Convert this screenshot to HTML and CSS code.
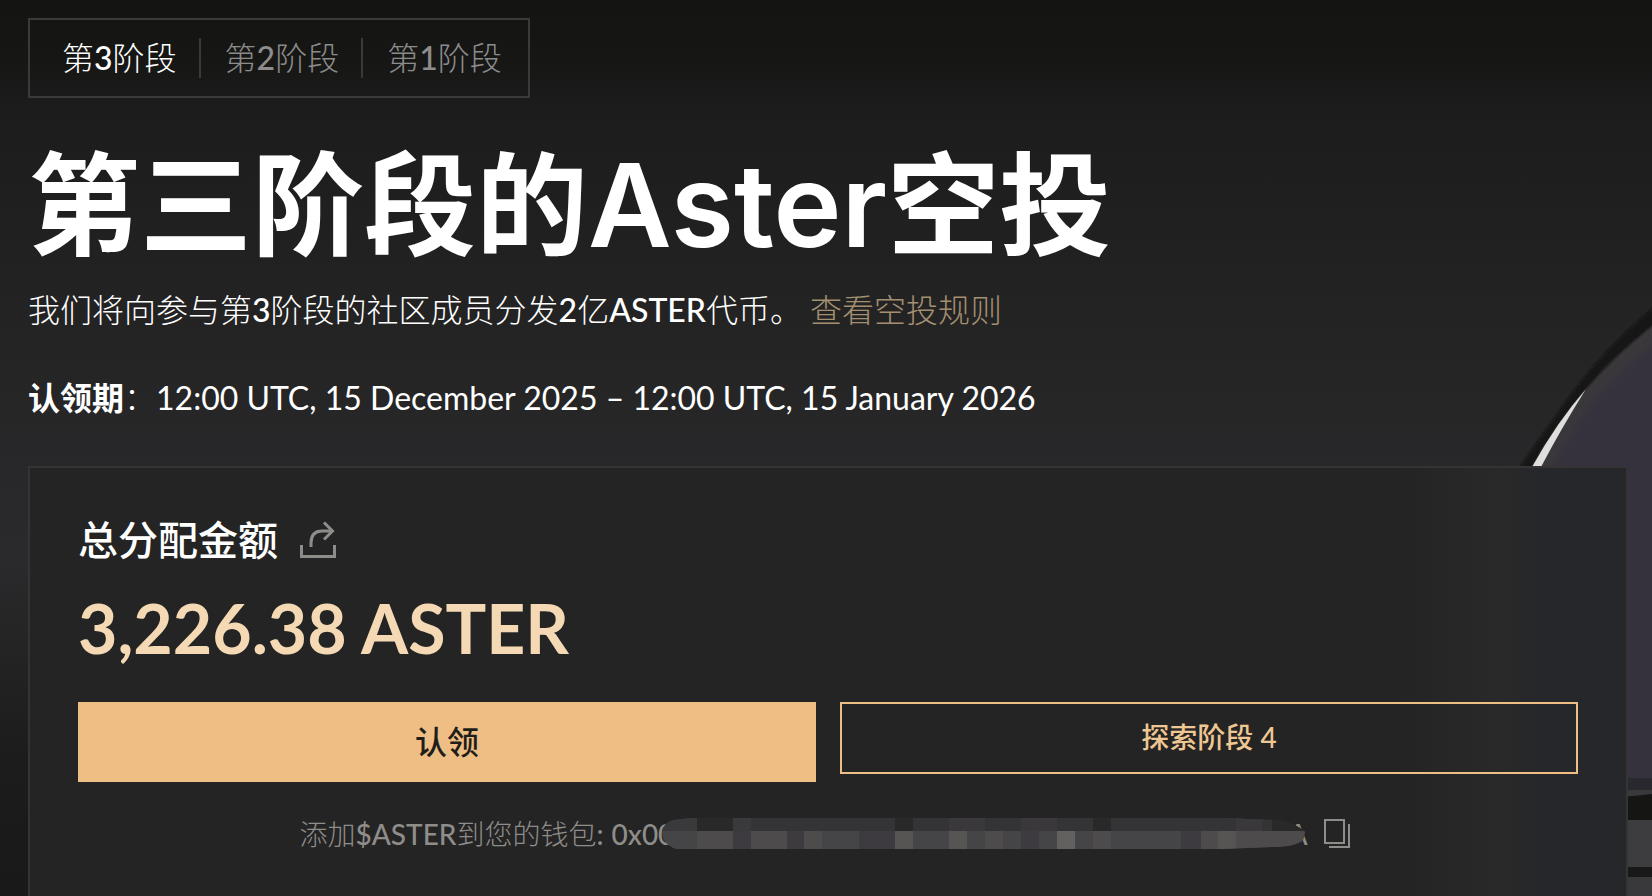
FILE: index.html
```html
<!DOCTYPE html>
<html lang="zh-CN">
<head>
<meta charset="utf-8">
<title>Aster 空投</title>
<link rel="stylesheet" href="styles.css">
</head>
<body>
<div class="page">
  <svg class="planet" viewBox="0 0 302 616" aria-hidden="true">
    <defs>
      <filter id="soft" x="-20%" y="-20%" width="140%" height="140%"><feGaussianBlur stdDeviation="1"/></filter>
      <filter id="softer" x="-20%" y="-20%" width="140%" height="140%"><feGaussianBlur stdDeviation="4"/></filter>
    </defs>
    <path d="M340 2L302 29Q246 76 208 133Q187 162 170 187V498H340Z" fill="#131312" filter="url(#soft)"/>
    <path d="M340 18L302 46Q262 78 236 109Q203 148 182 187V498H340Z" fill="#3a393b" filter="url(#soft)"/>
    <path d="M350 34L302 66Q262 96 236 132Q216 160 202 187V530H350Z" fill="#34323c" filter="url(#softer)"/>
    <path d="M236 109Q207 142 182 187H191Q212 147 236 109Z" fill="#dededc"/>
    <path d="M270 498H302V511H270Z" fill="#29282f"/>
    <path d="M270 510H302V616H270Z" fill="#39383b"/>
    <path d="M270 517Q286 516 302 514V540H270Z" fill="#151514"/>
    <path d="M270 540H302V587H270Z" fill="#3d3c3f"/>
    <path d="M270 587H302V597H270Z" fill="#191919"/>
  </svg>
  <main class="content">
    <nav class="tabs" aria-label="阶段">
      <button class="tab tab-active" type="button">第<span class="latin">3</span>阶段</button>
      <button class="tab" type="button">第<span class="latin">2</span>阶段</button>
      <button class="tab" type="button">第<span class="latin">1</span>阶段</button>
    </nav>
    <h1 class="title">第三阶段的<span class="title-brand">Aster</span>空投</h1>
    <p class="intro">我们将向参与第<span class="latin">3</span>阶段的社区成员分发<span class="latin">2</span>亿<span class="latin">ASTER</span>代币。<a class="rules" href="#rules">查看空投规则</a></p>
    <p class="period"><strong>认领期</strong><span class="colon">：</span><span>12:00 UTC, 15 December 2025 – 12:00 UTC, 15 January 2026</span></p>
    <section class="card">
      <div class="card-head">
        <h2 class="card-title">总分配金额</h2>
        <button class="icon-button" type="button" aria-label="分享">
          <svg width="36" height="38" viewBox="0 0 36 38" fill="none" stroke="currentColor" stroke-width="3"><path d="M1.500 24V35.500H34.500V24"/><path d="M11 26V22Q11 10 22 10H32"/><path d="M24 1.500L32.500 10L24 18.500"/></svg>
        </button>
      </div>
      <p class="amount">3,226.38 ASTER</p>
      <div class="actions">
        <button class="btn btn-primary" type="button">认领</button>
        <button class="btn btn-outline" type="button">探索阶段 4</button>
      </div>
      <div class="wallet">
        <span>添加<span class="latin">$ASTER</span>到您的钱包<span class="latin">:</span></span>
        <span class="address"><span>0x00</span><span>A</span>
          <svg class="mask" viewBox="0 0 644 32" preserveAspectRatio="none" aria-hidden="true">
            <defs><clipPath id="smear"><path d="M12 2L30 0H560L612 2Q636 6 643 14L641 22Q634 29 610 29L560 31H14Q0 26 0 14Q2 4 12 2Z"/></clipPath></defs>
            <g clip-path="url(#smear)">
              <path d="M0 0H644V31H0Z" fill="#454446"/>
              <path d="M0 0H644V13H0Z" fill="#343336"/>
              <path d="M0 0H35V13H0ZM71 0H89V13H71Z" fill="#3a393b"/>
              <path d="M35 0H71V13H35ZM233 0H251V13H233ZM431 0H449V13H431ZM610 0H644V13H610Z" fill="#292929"/>
              <path d="M287 0H323V13H287ZM359 0H395V13H359ZM574 0H600V13H574Z" fill="#3a383a"/>
              <path d="M35 13H71V31H35ZM89 13H125V31H89ZM142 13H160V31H142ZM323 13H341V31H323ZM431 13H449V31H431ZM539 13H556V31H539ZM574 13H644V31H574Z" fill="#4d4b4b"/>
              <path d="M71 13H89V31H71ZM125 13H142V31H125ZM197 13H233V31H197ZM359 13H377V31H359ZM519 13H539V31H519Z" fill="#3d3b3f"/>
              <path d="M233 13H251V31H233ZM287 13H305V31H287ZM556 13H574V31H556Z" fill="#575454"/>
              <path d="M395 13H413V31H395Z" fill="#636060"/>
            </g>
          </svg>
        </span>
        <button class="icon-button" type="button" aria-label="复制地址">
          <svg width="27" height="30" viewBox="0 0 27 30" fill="none" stroke="currentColor" stroke-width="2"><path d="M1 1H20V24H1Z"/><path d="M25 5V28H5"/></svg>
        </button>
      </div>
    </section>
  </main>
</div>
</body>
</html>
```
FILE: styles.css
```css
* { box-sizing: border-box; margin: 0; padding: 0; }

body {
  background: #1a1a1a;
  color: #fff;
  font-family: Lato, "Noto Sans CJK SC", sans-serif;
}

button { font: inherit; color: inherit; background: none; border: 0; cursor: pointer; }

.page {
  position: relative;
  overflow: hidden;
  background: linear-gradient(180deg, #141412 0, #161615 60px, #1c1c1c 110px, #222 280px, #28282a 470px, #2a2a2c 560px, #1c1c1c 760px, #191919 100%);
}

.planet {
  position: absolute;
  right: 0;
  top: 280px;
  width: 302px;
  height: 616px;
}

.content {
  position: relative;
  display: flex;
  flex-direction: column;
  min-height: 100vh;
  padding: 18px 24px 0 28px;
}

.latin { font-weight: 500; }

.tabs {
  display: flex;
  align-items: center;
  width: fit-content;
  padding: 18px 4px 18px 8px;
  border: 2px solid #3a3a3a;
}

.tab {
  padding: 0 22px 0 24px;
  font-size: 32px;
  line-height: 40px;
  font-weight: 300;
  color: #8c8c8c;
}

.tab + .tab { border-left: 2px solid #3a3a3a; }
.tab-active { color: #fff; }

.title {
  margin-top: 38px;
  font-family: Inter, "Noto Sans CJK SC", sans-serif;
  font-size: 112px;
  line-height: 140px;
  font-weight: 600;
}

.title-brand { font-size: 115px; }

.intro {
  margin-top: 10px;
  font-size: 32px;
  line-height: 48px;
  font-weight: 300;
}

.rules { margin-left: 8px; color: #a39071; text-decoration: none; }

.period {
  margin-top: 40px;
  font-size: 32px;
  line-height: 48px;
  font-weight: 400;
}

.colon { font-weight: 300; }

.card {
  flex: 1;
  margin-top: 44px;
  padding: 44px 48px 32px;
  border: 2px solid #343434;
  border-bottom: 0;
  background: linear-gradient(90deg, #242424 0, #242424 86%, #292929 92%, #26272b 95%, #26272b 100%);
}

.card-head { display: flex; align-items: center; gap: 22px; }

.card-title { font-size: 40px; line-height: 56px; font-weight: 500; }

.icon-button { display: flex; color: #8f8d8a; }

.amount {
  margin-top: 20px;
  font-size: 68px;
  line-height: 80px;
  font-weight: 700;
  color: #f4d9b4;
}

.actions {
  display: grid;
  grid-template-columns: 1fr 1fr;
  align-items: start;
  gap: 24px;
  margin-top: 34px;
}

.btn { padding-bottom: 4px; font-weight: 500; }
.btn-primary { height: 80px; font-size: 32px; color: #1f1e1a; background: #efbe84; }
.btn-outline { height: 72px; font-size: 28px; color: #efc792; border: 2px solid #efbe84; }

.wallet {
  display: flex;
  align-items: center;
  justify-content: center;
  margin-top: 32px;
  padding-right: 6px;
  font-size: 28px;
  line-height: 40px;
  font-weight: 300;
  color: #8f8d8a;
}

.address {
  position: relative;
  display: flex;
  justify-content: space-between;
  width: 696px;
  margin: 0 16px 0 8px;
  font-weight: 500;
}

.mask {
  position: absolute;
  left: 50px;
  top: 4px;
  width: 644px;
  height: 32px;
}
```
